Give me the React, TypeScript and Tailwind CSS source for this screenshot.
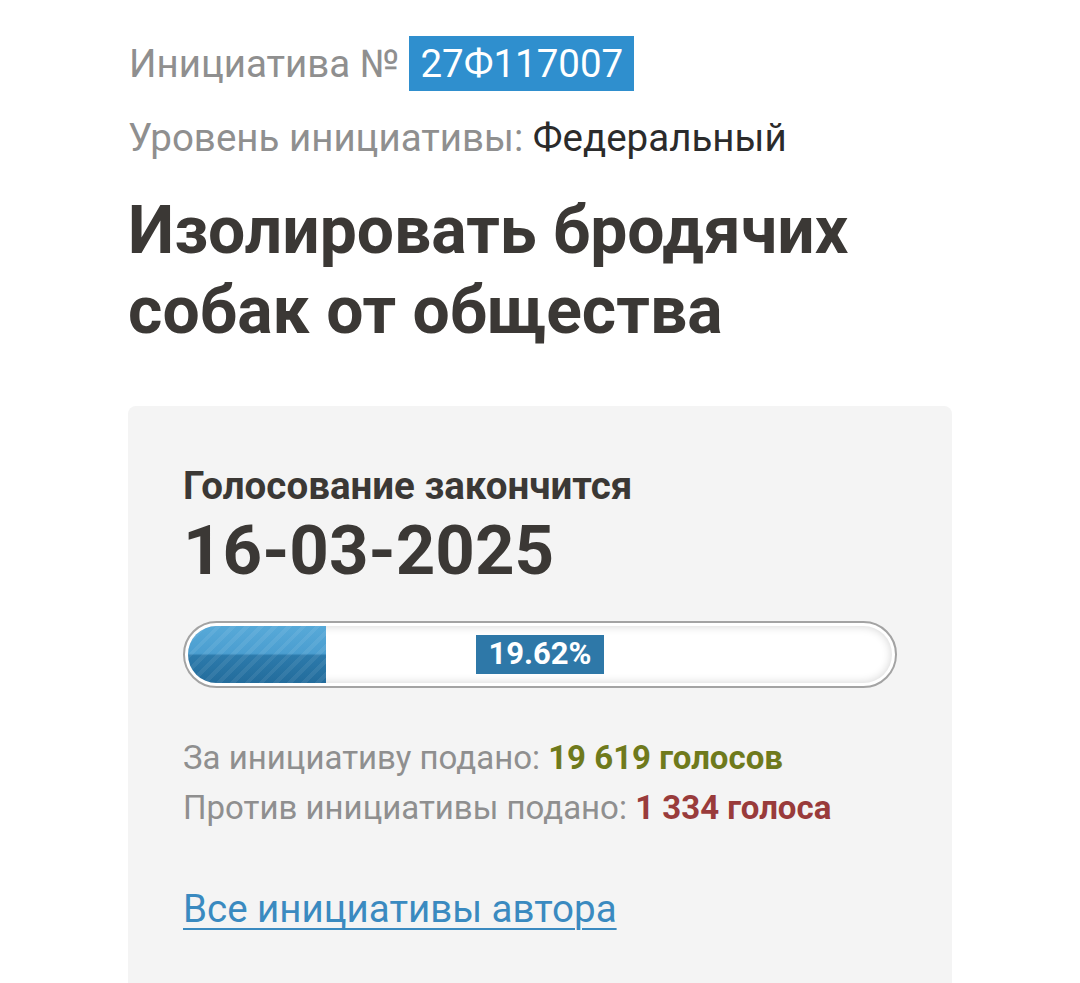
export default function App() {
  const percent = 19.62;

  return (
    <div className="min-h-screen bg-white px-[128px] pt-[36px] font-['Roboto',_'Noto_Sans',_sans-serif]">
      {/* Header */}
      <div className="flex items-center h-[55px] text-[38.5px] text-[#8f8f8f]">
        <span className="ml-[1px]">Инициатива №</span>
        <span className="ml-[10px] flex items-center h-[55px] px-[11px] bg-[#2f8fce] text-white">27Ф117007</span>
      </div>
      <div className="mt-[24px] text-[38.5px] leading-[46px] text-[#8f8f8f]">
        Уровень инициативы: <span className="text-[#2b2b2b]">Федеральный</span>
      </div>
      <h1 className="mt-[30px] text-[66px] leading-[80px] font-bold text-[#3b3835]">
        Изолировать бродячих собак от общества
      </h1>

      {/* Voting card */}
      <div className="mt-[55px] rounded-[8px] bg-[#f4f4f4] px-[55px] pt-[57px] pb-[80px]">
        <div className="text-[38.5px] leading-[46px] font-bold text-[#3b3835]">Голосование закончится</div>
        <div className="mt-[4px] text-[69px] leading-[76px] font-bold text-[#3b3835]">16-03-2025</div>

        <div className="relative mt-[32px] h-[67px] rounded-full border-2 border-[#a3a3a3] bg-white p-[3px]">
          <div className="h-full rounded-full overflow-hidden bg-white shadow-[inset_0_0_10px_rgba(0,0,0,0.18)]">
            <div
              className="h-full bg-[repeating-linear-gradient(135deg,rgba(255,255,255,0.07)_0px,rgba(255,255,255,0.07)_4px,transparent_4px,transparent_10px),linear-gradient(to_bottom,#57a9d8_0%,#4b9ed0_48%,#2c7aab_52%,#236c9c_100%)]"
              style={{ width: `${percent}%` }}
            />
          </div>
          <div className="absolute inset-0 flex items-center justify-center">
            <span className="flex items-center h-[39px] px-[12px] bg-[#2e78a8] text-white text-[31px] font-bold">
              {percent}%
            </span>
          </div>
        </div>

        <div className="mt-[45px] text-[33px] leading-[50px] text-[#8f8f8f]">
          <div>
            За инициативу подано: <span className="font-bold text-[#6f7a1c]">19 619 голосов</span>
          </div>
          <div>
            Против инициативы подано: <span className="font-bold text-[#993b3b]">1 334 голоса</span>
          </div>
        </div>

        <a
          href="#"
          className="block mt-[53px] text-[38.5px] leading-[46px] text-[#3a8ac0] underline decoration-2 underline-offset-[6px]"
        >
          Все инициативы автора
        </a>
      </div>
    </div>
  );
}
